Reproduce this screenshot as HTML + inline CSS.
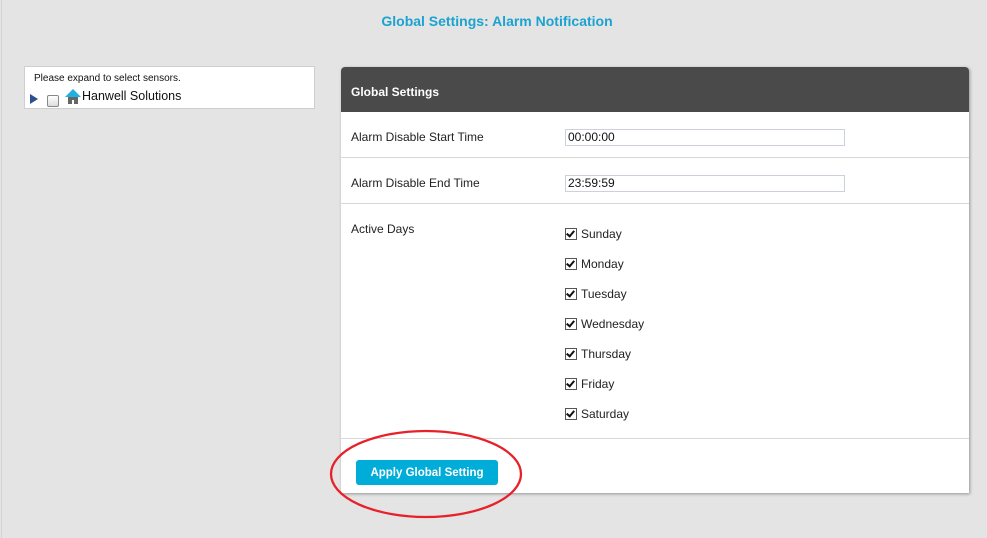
<!DOCTYPE html>
<html><head><style>
body{margin:0;width:987px;height:538px;background:#e4e4e4;font-family:"Liberation Sans",Arial,sans-serif;position:relative;overflow:hidden}
.l{position:absolute;left:1px;top:0;width:1px;height:538px;background:#d4d4d4}
h1{position:absolute;left:0;width:994px;top:13px;margin:0;text-align:center;font-size:14px;color:#1aa3d0;font-weight:bold}
.tree{position:absolute;left:24px;top:66px;width:289px;height:41px;background:#fff;border:1px solid #cfcfcf}
.tree .t{position:absolute;left:9px;top:6px;font-size:10px;color:#111}
.tree .h{position:absolute;left:57px;top:22px;font-size:12.5px;color:#111}
.panel{position:absolute;left:341px;top:67px;width:628px;height:426px;background:#fff;border-radius:4px 4px 0 0;box-shadow:1px 1px 3px rgba(0,0,0,.35)}
.hd{height:45px;background:#4a4a4a;border-radius:4px 4px 0 0;color:#fff;font-weight:bold;font-size:12px;line-height:50px;padding-left:10px}
.sep{position:absolute;left:0;width:628px;height:1px;background:#d8d8d8}
.lab{position:absolute;left:10px;font-size:12px;color:#222}
.inp{position:absolute;left:224px;width:276px;height:15px;border:1px solid #ccd2dc;font-size:12px;line-height:15px;padding-left:2px;color:#111}
.cb{position:absolute;left:224px;font-size:12px;color:#222}
.cb i{display:inline-block;width:10px;height:10px;border:1px solid #555;vertical-align:-2px;margin-right:4px;position:relative;background:#fff}
.cb i:after{content:"";position:absolute;left:2px;top:0px;width:3px;height:6px;border:solid #111;border-width:0 2px 2px 0;transform:rotate(40deg)}
.btn{position:absolute;left:15px;top:393px;width:142px;height:25px;background:#00acd8;border-radius:3px;color:#fff;font-weight:bold;font-size:11.5px;text-align:center;line-height:26px}
</style></head><body>
<div class="l"></div>
<h1>Global Settings: Alarm Notification</h1>
<div class="tree">
<div class="t">Please expand to select sensors.</div>
<svg style="position:absolute;left:4px;top:27px" width="10" height="10"><path d="M1 0L9 5L1 10Z" fill="#2b4f8f"/></svg>
<div style="position:absolute;left:22px;top:28px;width:10px;height:10px;border:1px solid #888;border-radius:2px;background:linear-gradient(#fff,#ddd)"></div>
<svg style="position:absolute;left:40px;top:22px" width="16" height="16"><path d="M8 0L16 8H0Z" fill="#20b0e0"/><rect x="3" y="8" width="10" height="7" fill="#666"/><rect x="7" y="11" width="2" height="4" fill="#fff"/></svg>
<div class="h">Hanwell Solutions</div>
</div>
<div class="panel">
<div class="hd">Global Settings</div>
<div class="lab" style="top:63px">Alarm Disable Start Time</div>
<div class="inp" style="top:62px">00:00:00</div>
<div class="sep" style="top:90px"></div>
<div class="lab" style="top:109px">Alarm Disable End Time</div>
<div class="inp" style="top:108px">23:59:59</div>
<div class="sep" style="top:136px"></div>
<div class="lab" style="top:155px">Active Days</div>
<div class="cb" style="top:160px"><i></i>Sunday</div>
<div class="cb" style="top:190px"><i></i>Monday</div>
<div class="cb" style="top:220px"><i></i>Tuesday</div>
<div class="cb" style="top:250px"><i></i>Wednesday</div>
<div class="cb" style="top:280px"><i></i>Thursday</div>
<div class="cb" style="top:310px"><i></i>Friday</div>
<div class="cb" style="top:340px"><i></i>Saturday</div>
<div class="sep" style="top:371px"></div>
<div class="btn">Apply Global Setting</div>
</div>
<svg style="position:absolute;left:0;top:0" width="987" height="538"><ellipse cx="426" cy="474" rx="95" ry="43" fill="none" stroke="#e8202a" stroke-width="2.3"/></svg>
</body></html>
